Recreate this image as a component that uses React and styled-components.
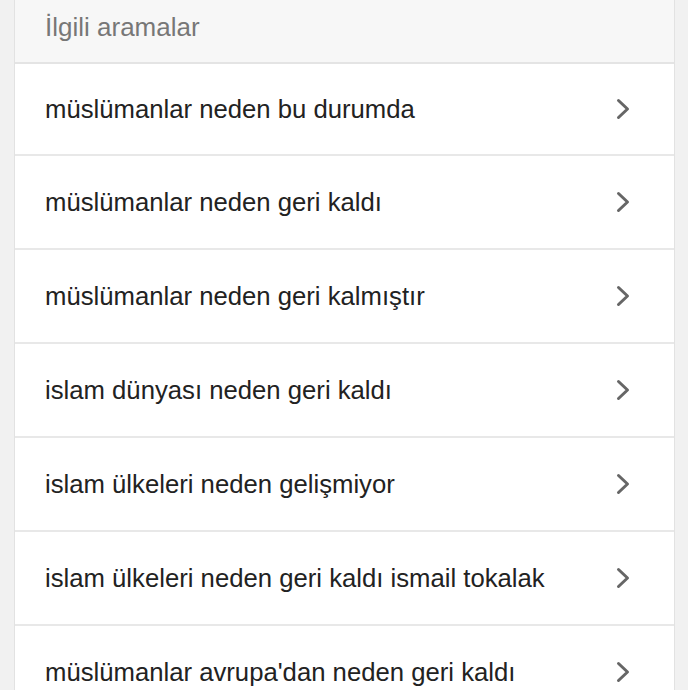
import React from "react";
import styled, { createGlobalStyle } from "styled-components";

const Global = createGlobalStyle`
  html, body { margin: 0; padding: 0; background: #f1f1f1; }
  body { font-family: "Liberation Sans", Arial, Helvetica, sans-serif; }
`;

const Page = styled.div`
  padding: 0 13px 0 14px;
  height: 690px;
  overflow: hidden;
  box-sizing: border-box;
`;

const Card = styled.div`
  background: #fff;
  border-left: 1px solid #e2e2e2;
  border-right: 1px solid #e2e2e2;
`;

const Header = styled.div`
  height: 64px;
  background: #f7f7f7;
  border-bottom: 2px solid #e4e4e4;
  display: flex;
  align-items: center;
  padding: 0 30px 7px;
  font-size: 26px;
  color: #777;
  box-sizing: border-box;
`;

const Row = styled.a`
  display: flex;
  align-items: center;
  justify-content: space-between;
  height: ${(p) => (p.$first ? 92 : 94)}px;
  box-sizing: border-box;
  padding: 0 43px 0 30px;
  border-bottom: 2px solid #e8e8e8;
  font-size: 25.7px;
  color: #222;
  text-decoration: none;
`;

const Chevron = () => (
  <svg width="15" height="22" viewBox="0 0 15 22" fill="none">
    <path d="M2.5 2.5 L11.5 11 L2.5 19.5" stroke="#666" strokeWidth="3" strokeLinecap="round" strokeLinejoin="round" />
  </svg>
);

const items = [
  "müslümanlar neden bu durumda",
  "müslümanlar neden geri kaldı",
  "müslümanlar neden geri kalmıştır",
  "islam dünyası neden geri kaldı",
  "islam ülkeleri neden gelişmiyor",
  "islam ülkeleri neden geri kaldı ismail tokalak",
  "müslümanlar avrupa'dan neden geri kaldı",
];

export default function App() {
  return (
    <>
      <Global />
      <Page>
        <Card>
          <Header>İlgili aramalar</Header>
          {items.map((t, i) => (
            <Row key={t} href="#" $first={i === 0}>
              <span>{t}</span>
              <Chevron />
            </Row>
          ))}
        </Card>
      </Page>
    </>
  );
}
